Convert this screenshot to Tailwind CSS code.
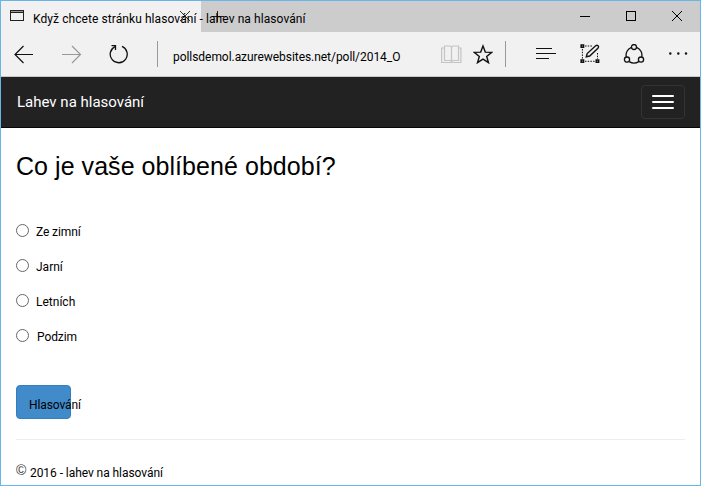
<!DOCTYPE html>
<html lang="cs">
<head>
<meta charset="utf-8">
<title>Když chcete stránku hlasování - lahev na hlasování</title>
<script src="https://cdn.jsdelivr.net/npm/@tailwindcss/browser@4"></script>
</head>
<body class="bg-white overflow-hidden">
<div class="w-[701px] h-[486px] border border-[#68b6e9] flex flex-col bg-white text-black text-[12px] font-[Roboto,sans-serif] whitespace-nowrap overflow-hidden">
  <!-- Title bar -->
  <header class="h-[31px] shrink-0 bg-[#cccccc] flex">
    <div class="relative w-[200px] shrink-0 bg-[#f1f1f1] flex">
      <svg class="ml-[9px] mt-[8px] w-[15px] h-[13px] shrink-0" viewBox="0 0 15 13" fill="none" stroke="#222" shape-rendering="crispEdges"><path d="M.5 1.5h13v10H.5zM.5 3.5h13" /><path d="M1 2.5h12" stroke="#999"/></svg>
      <span class="relative z-10 ml-[8px] mt-[8px] w-0 leading-[20px] tracking-[0.08px]">Když chcete stránku hlasování - lahev na hlasování</span>
      <svg class="absolute left-[178px] top-[9px] w-[12px] h-[12px]" viewBox="0 0 12 12" stroke="#333" fill="none"><path d="M1 1l10 10M11 1L1 11"/></svg>
    </div>
    <svg class="ml-[10px] mt-[9px] w-[13px] h-[13px]" viewBox="0 0 13 13" stroke="#222" shape-rendering="crispEdges"><path d="M1 6.500h12M6.500 1v11"/></svg>
    <div class="ml-auto flex pt-[9px] pr-[17px] gap-[34px]">
      <svg class="w-[12px] h-[12px]" viewBox="0 0 12 12" stroke="#000" shape-rendering="crispEdges"><path d="M1 6.500h10"/></svg>
      <svg class="w-[12px] h-[12px]" viewBox="0 0 12 12" stroke="#000" fill="none" shape-rendering="crispEdges"><path d="M1.500 1.500h9v9h-9z"/></svg>
      <svg class="w-[12px] h-[12px]" viewBox="0 0 12 12" stroke="#000" fill="none"><path d="M1 1l10 10M11 1L1 11"/></svg>
    </div>
  </header>
  <!-- Address bar -->
  <div class="h-[45px] shrink-0 bg-[#f1f1f1] border-b border-[#c8c8c8] flex items-start">
    <svg class="ml-[13px] mt-[12px] w-[20px] h-[20px] shrink-0" viewBox="0 0 20 20" fill="none" stroke="#111" stroke-width="1.2"><path d="M19 10.500H1M9.500 2L1 10.500 9.500 19"/></svg>
    <svg class="ml-[28px] mt-[12px] w-[20px] h-[20px] shrink-0" viewBox="0 0 20 20" fill="none" stroke="#999" stroke-width="1.2"><path d="M0 10.500h18.500M10 2l8.500 8.500L10 19"/></svg>
    <svg class="ml-[27px] mt-[12px] w-[20px] h-[20px] shrink-0" viewBox="0 0 20 20" fill="none" stroke="#111" stroke-width="1.3"><path d="M6 2.600A8.500 8.500 0 1 0 13 2.400"/><path d="M2.500 1.700h4v4.300"/></svg>
    <div class="ml-[28px] mt-[9px] w-px h-[26px] bg-[#999]"></div>
    <span class="ml-[15px] mt-[15px] w-[268px] leading-[20px] tracking-[-0.05px]">pollsdemol.azurewebsites.net/poll/2014_O</span>
    <svg class="mt-[12px] w-[21px] h-[20px] shrink-0" viewBox="0 0 21 20" fill="none" stroke="#c4c4c4" stroke-width="1.200"><path d="M3.500 2h5q1.500 0 2 1 .5-1 2-1h5v14.500h-5q-1.500 0-2 1-.5-1-2-1h-5zM10.500 3V18.500M3 4H.6v14.500h19.300V4H18"/></svg>
    <svg class="ml-[11px] mt-[12px] w-[20px] h-[20px] shrink-0" viewBox="0 0 20 20" fill="none" stroke="#111" stroke-width="1.400"><path d="M10 2l2.300 6.100 6.500.3-5.100 4 1.800 6.300L10 15.200l-5.500 3.500 1.800-6.300-5.100-4 6.500-.3z"/></svg>
    <div class="ml-[12px] mt-[9px] w-px h-[26px] bg-[#999]"></div>
    <svg class="ml-[30px] mt-[12px] w-[21px] h-[20px] shrink-0" viewBox="0 0 21 20" stroke="#111" shape-rendering="crispEdges"><path d="M0 4.500h16M0 9.500h20M0 14.500h13"/></svg>
    <svg class="ml-[23px] mt-[12px] w-[20px] h-[20px] shrink-0" viewBox="0 0 20 20" fill="none" stroke="#111"><path d="M5 2h8M2.400 5v10M17.500 9v6M5 17.300h10" stroke-dasharray="1.500 1.200"/><path d="M1.200 1h2.300v2.300H1.200zM1.200 16h2.300v2.300H1.200zM16.300 16h2.300v2.300h-2.300z" stroke-width="1.600"/><path d="M6.300 12.800l.9-3.200 8.700-8q1.800-.9 2.600.8.200.9-.6 1.800L9.700 12z" stroke-width="1.400"/></svg>
    <svg class="ml-[23px] mt-[12px] w-[22px] h-[20px] shrink-0" viewBox="0 0 22 20" fill="none" stroke="#111" stroke-width="1.300"><path d="M8.400 3.300A8.300 8.300 0 0 0 3.300 13M13.600 3.300A8.300 8.300 0 0 1 18.700 13M6.200 17.600Q11 20.800 15.800 17.600"/><circle cx="11" cy="3" r="2.500"/><circle cx="4" cy="15.600" r="2.600"/><circle cx="18" cy="15.600" r="2.600"/></svg>
    <svg class="ml-[23px] mt-[12px] w-[20px] h-[20px] shrink-0" viewBox="0 0 20 20" fill="#111"><circle cx="2.300" cy="9.500" r="1.200"/><circle cx="10.300" cy="9.500" r="1.200"/><circle cx="18" cy="9.500" r="1.200"/></svg>
  </div>
  <!-- Site navigation -->
  <nav class="h-[51px] shrink-0 bg-[#222222] border-b border-[#080808] flex items-center justify-between pl-[16px] pr-[15px]">
    <span class="text-[15px] leading-[20px] text-white">Lahev na hlasování</span>
    <div class="w-[44px] h-[34px] rounded-[4px] border border-[#333] flex flex-col items-center justify-center gap-[4px]">
      <i class="w-[22px] h-[2px] rounded-[1px] bg-white"></i><i class="w-[22px] h-[2px] rounded-[1px] bg-white"></i><i class="w-[22px] h-[2px] rounded-[1px] bg-white"></i>
    </div>
  </nav>
  <!-- Poll -->
  <main class="px-[15px] flex flex-col">
    <h1 class="mt-[21px] h-[34px] leading-[34px] text-[25px] tracking-[0.05px] font-['Liberation_Sans',Arial,sans-serif]">Co je vaše oblíbené období?</h1>
    <div class="mt-[39px] flex flex-col gap-[15px] leading-[20px]">
      <label class="h-[20px] flex items-start"><i class="mt-[2px] w-[13px] h-[13px] rounded-full border border-[#666]"></i><span class="ml-[7px] tracking-[-0.1px]">Ze zimní</span></label>
      <label class="h-[20px] flex items-start"><i class="mt-[2px] w-[13px] h-[13px] rounded-full border border-[#666]"></i><span class="ml-[7px]">Jarní</span></label>
      <label class="h-[20px] flex items-start"><i class="mt-[2px] w-[13px] h-[13px] rounded-full border border-[#666]"></i><span class="ml-[7px]">Letních</span></label>
      <label class="h-[20px] flex items-start"><i class="mt-[2px] w-[13px] h-[13px] rounded-full border border-[#666]"></i><span class="ml-[8px] tracking-[-0.1px]">Podzim</span></label>
    </div>
    <button class="mt-[38px] w-[55px] h-[34px] rounded-[4px] border border-[#357ebd] bg-[#428bca] pl-[12px] pt-[5px] text-left tracking-[-0.1px]">Hlasování</button>
    <div class="mt-[20px] h-px bg-[#eeeeee]"></div>
    <footer class="mt-[22px] flex leading-[20px]"><span class="w-[14px] -mt-[2px] text-[14px] text-[#333] font-['Liberation_Sans',sans-serif]">©</span><span class="mt-px tracking-[-0.06px]">2016 - lahev na hlasování</span></footer>
  </main>
</div>
</body>
</html>
